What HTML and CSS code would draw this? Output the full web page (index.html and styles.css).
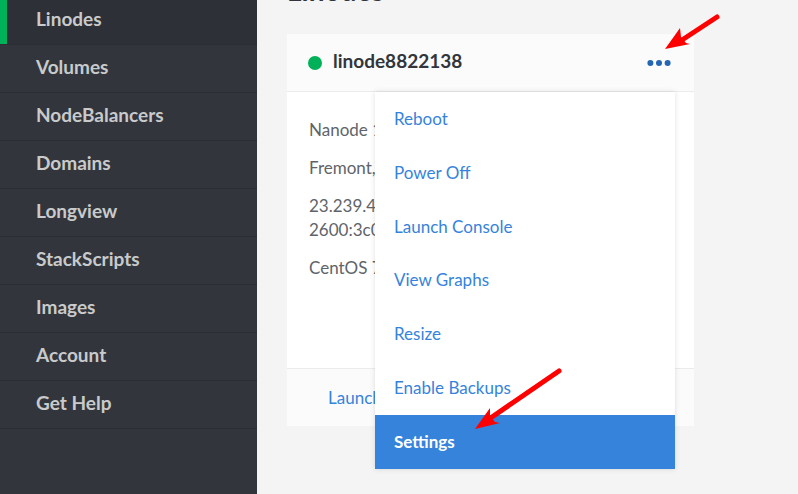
FILE: index.html
```html
<!DOCTYPE html>
<html lang="en">
<head>
<meta charset="utf-8">
<meta name="viewport" content="width=device-width, initial-scale=1">
<title>Linodes</title>
<link rel="stylesheet" href="styles.css">
</head>
<body>
<div class="app">
  <nav class="sidebar" aria-label="Main">
    <a class="nav-link nav-link-active" href="#linodes" aria-current="page">Linodes</a>
    <a class="nav-link" href="#volumes">Volumes</a>
    <a class="nav-link" href="#nodebalancers">NodeBalancers</a>
    <a class="nav-link" href="#domains">Domains</a>
    <a class="nav-link" href="#longview">Longview</a>
    <a class="nav-link" href="#stackscripts">StackScripts</a>
    <a class="nav-link" href="#images">Images</a>
    <a class="nav-link" href="#account">Account</a>
    <a class="nav-link" href="#help">Get Help</a>
  </nav>
  <main class="main">
    <h1 class="title">Linodes</h1>
    <article class="card">
      <header class="card-header">
        <span class="status"></span>
        <h2 class="card-name">linode8822138</h2>
        <button class="more" type="button" aria-label="Actions" aria-expanded="true">
          <svg class="more-icon" viewBox="0 0 24 8" aria-hidden="true">
            <circle cx="3.4" cy="4" r="3"/><circle cx="12" cy="4" r="3"/><circle cx="20.6" cy="4" r="3"/>
          </svg>
        </button>
      </header>
      <div class="card-body">
        <p>Nanode 1</p>
        <p>Fremont,</p>
        <p>23.239.4<br>2600:3c0</p>
        <p>CentOS 7</p>
      </div>
      <footer class="card-footer"><a class="console-link" href="#console">Launch</a></footer>
      <div class="menu">
        <a class="menu-item" href="#reboot">Reboot</a>
        <a class="menu-item" href="#power">Power Off</a>
        <a class="menu-item" href="#console">Launch Console</a>
        <a class="menu-item" href="#graphs">View Graphs</a>
        <a class="menu-item" href="#resize">Resize</a>
        <a class="menu-item" href="#backups">Enable Backups</a>
        <a class="menu-item menu-item-active" href="#settings">Settings</a>
      </div>
      <svg class="arrow arrow-actions" viewBox="0 0 56 36" aria-hidden="true">
        <path class="arrow-line" d="M52 3 17 26"/>
        <path d="M0 35 15 14 16 23 21 29 25 30Z"/>
      </svg>
      <svg class="arrow arrow-settings" viewBox="0 0 88 62" aria-hidden="true">
        <path class="arrow-line" d="M84 3 17 49"/>
        <path d="M0 61 15 40 15 48 20 54 25 55Z"/>
      </svg>
    </article>
  </main>
</div>
</body>
</html>
```
FILE: styles.css
```css
* { box-sizing: border-box; }

body {
  margin: 0;
  background: #f4f4f4;
  color: #606469;
  font: 17px/24px Lato, sans-serif;
}

a { color: #3683dc; text-decoration: none; }

.app {
  display: flex;
  height: 100vh;
  overflow: hidden;
}

.sidebar {
  flex: 0 0 257px;
  background: #32363c;
}

.nav-link {
  display: block;
  padding: 10px 36px 13px;
  border-bottom: 1px solid #2b2e34;
  color: #c9cacb;
  font-size: 19px;
  font-weight: 700;
}

.nav-link-active {
  padding-top: 7px;
  background: #2d3036;
  box-shadow: inset 7px 0 #00b159;
}

.main {
  flex: 1;
  min-width: 0;
  padding: 0 30px;
}

.title {
  margin: -26px 0 28px;
  color: #32363c;
  font-size: 28px;
  line-height: 32px;
}

.card {
  position: relative;
  max-width: 407px;
  background: #fff;
}

.card-header {
  display: flex;
  align-items: center;
  gap: 11px;
  padding: 14px 20px 17px 21px;
  border-bottom: 1px solid #ebebeb;
  background: #fbfbfb;
}

.status {
  width: 14px;
  height: 14px;
  margin-top: 4px;
  border-radius: 50%;
  background: #00b159;
}

.card-name {
  flex: 1;
  margin: 0;
  color: #32363c;
  font-size: 19px;
  line-height: 26px;
}

.more {
  display: flex;
  padding: 4px 3px 0;
  border: 0;
  background: none;
}

.more-icon { width: 24px; height: 8px; fill: #2466b3; }

.card-body {
  min-height: 276px;
  padding: 26px 22px;
}

.card-body p { margin: 0 0 14px; }

.card-footer {
  padding: 17px 41px 16px;
  border-top: 1px solid #ebebeb;
  background: #fbfbfb;
}

.menu {
  position: absolute;
  top: 58px;
  right: 19px;
  display: grid;
  width: 300px;
  min-height: 377px;
  background: #fff;
  box-shadow: 0 0 5px rgba(88, 88, 88, 0.2);
}

.menu-item {
  display: flex;
  align-items: center;
  padding: 0 19px;
}

.menu-item-active {
  background: #3683dc;
  color: #fff;
  font-weight: 700;
}

.arrow { position: absolute; fill: #f00; }

.arrow-line {
  fill: none;
  stroke: #f00;
  stroke-width: 5;
  stroke-linecap: round;
}

.arrow-actions { top: -20px; right: -27px; width: 56px; height: 36px; }

.arrow-settings { top: 334px; right: 131px; width: 88px; height: 62px; }
```
